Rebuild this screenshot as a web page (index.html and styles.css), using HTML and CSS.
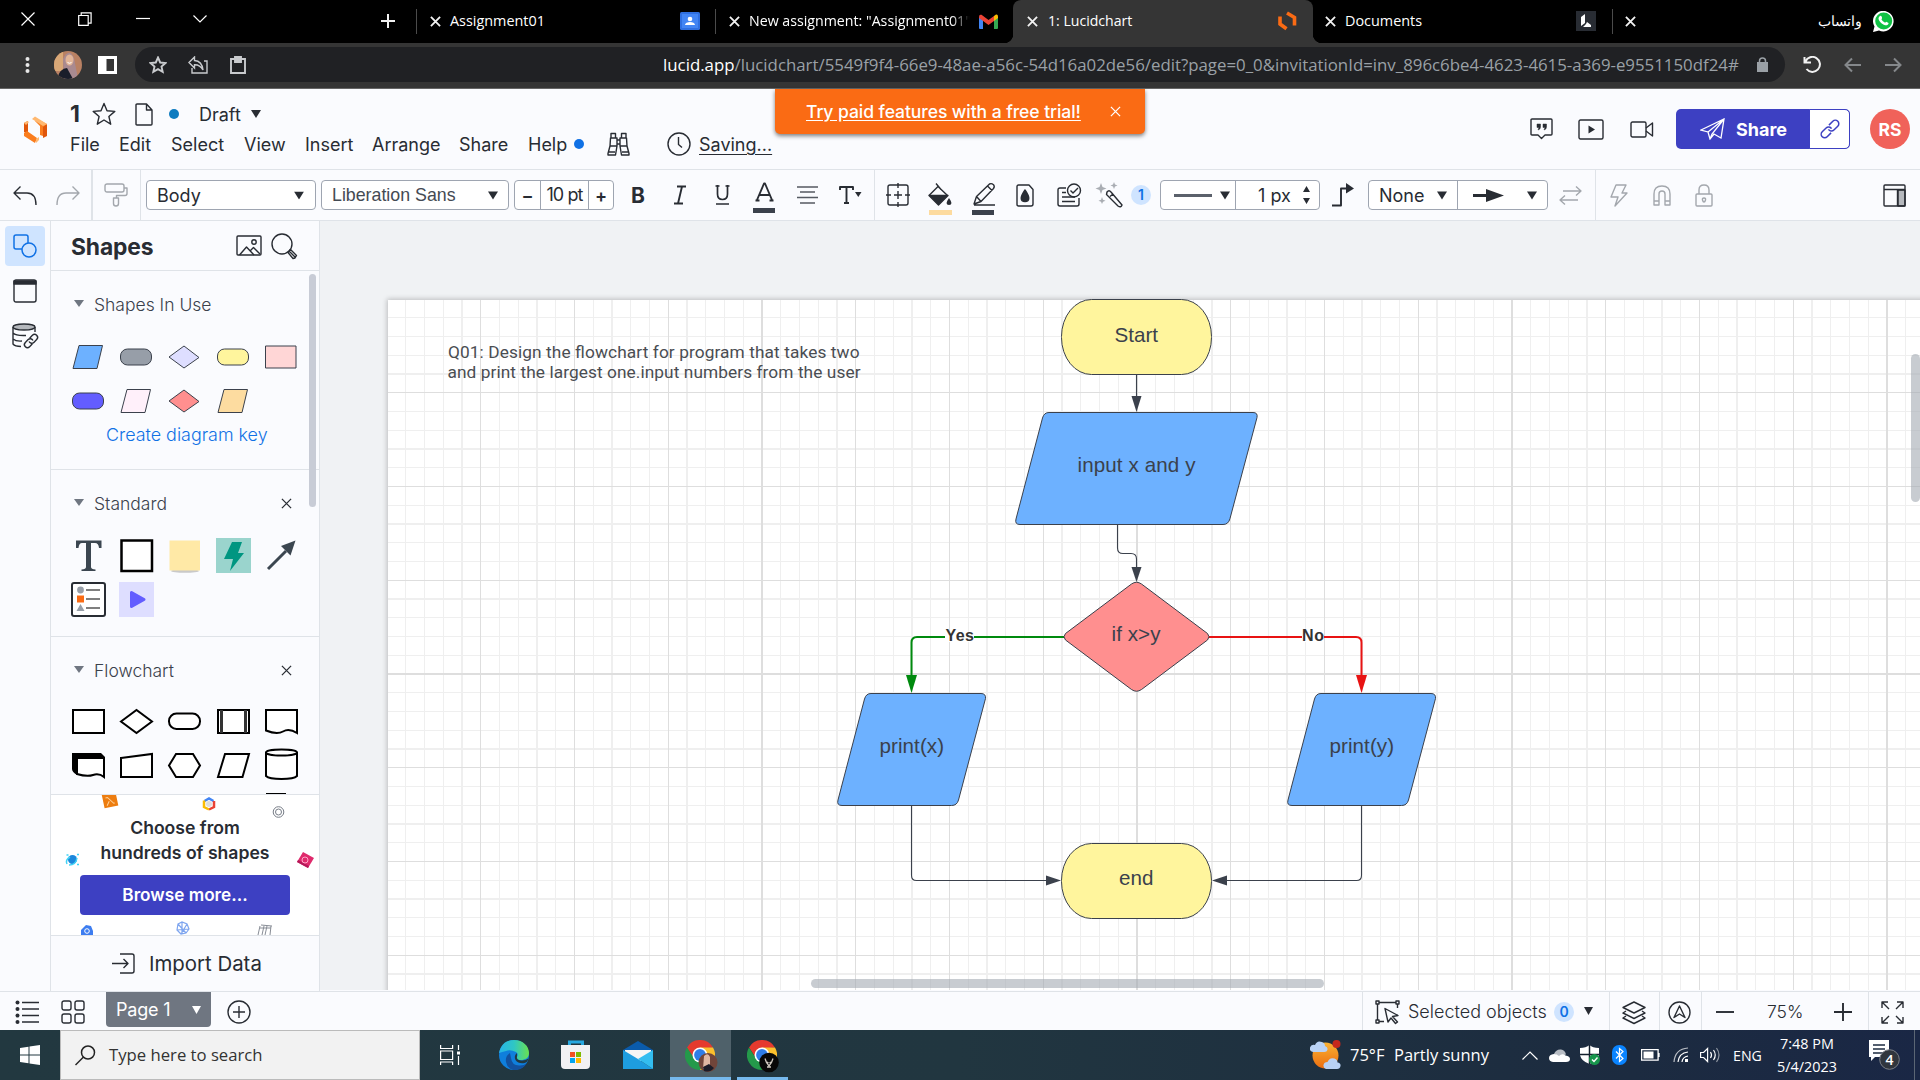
FILE: index.html
```html
<!DOCTYPE html>
<html lang="en">
<head>
<meta charset="utf-8">
<title>1: Lucidchart</title>
<link rel="stylesheet" href="styles.css">
</head>
<body>
<svg class="defs" width="0" height="0">
  <defs>
    <symbol id="x" viewBox="0 0 12 12"><path d="M1 1l10 10M11 1L1 11"/></symbol>
    <symbol id="caret" viewBox="0 0 10 8"><path d="M0 0h10L5 8z"/></symbol>
    <symbol id="chrome" viewBox="0 0 30 30">
      <path fill="#e53a2e" d="M2 7.5A15 15 0 0 1 28 7.5L15 8.500 9 18z"/>
      <path fill="#24994a" d="M2 7.500A15 15 0 0 0 15 30l6.500-11.300L9 18.500z"/>
      <path fill="#fbc02d" d="M28 7.500A15 15 0 0 1 15 30l6.500-11.500L15 7.500z"/>
      <circle cx="15" cy="15" r="7.500" fill="#fff"/><circle cx="15" cy="15" r="5.900" fill="#2f7de8"/>
    </symbol>
  </defs>
</svg>

<div class="tabstrip">
  <svg class="wt" width="14" height="14" viewBox="0 0 14 14"><path d="M.5.5l13 13M13.500.5L.5 13.500"/></svg>
  <svg class="wt" width="14" height="14" viewBox="0 0 14 14"><path d="M.7 3.500h9.500v9.800H.7zM3.200 3.500V.8h9.900v10.400h-2.900"/></svg>
  <svg class="wt" width="14" height="14" viewBox="0 0 14 14"><path d="M0 6.500h14"/></svg>
  <svg class="wt" width="14" height="14" viewBox="0 0 14 14"><path d="M.5 3.500L7 10 13.500 3.500"/></svg>
  <svg class="wb low" width="16" height="16" viewBox="0 0 16 16"><path d="M8 1v14M1 8h14"/></svg>
  <i class="sep"></i>
  <svg class="wb low" width="11" height="11"><use href="#x"/></svg>
  <span class="tt t-a">Assignment01</span>
  <svg class="low" width="20" height="18"><rect width="20" height="18" rx="1.500" fill="#2f6fe0"/><rect x="2" y="2" width="16" height="14" fill="#4285f4"/><circle cx="10" cy="7" r="2.300" fill="#fff"/><path d="M5 13c0-4 10-4 10 0z" fill="#fff"/></svg>
  <i class="sep"></i>
  <svg class="wb low" width="11" height="11"><use href="#x"/></svg>
  <span class="tt fade t-b">New assignment: "Assignment01"</span>
  <svg class="low" width="19" height="15" viewBox="0 0 19 15"><path fill="#4285f4" d="M0 3v11q0 1 1 1h3V6z"/><path fill="#34a853" d="M19 3v11q0 1-1 1h-3V6z"/><path fill="#fbbc04" d="M15 2l2-1.500q2-.5 2 2V4l-4 3z"/><path fill="#ea4335" d="M0 3Q0 0 2.500.8L9.500 6l5.500-4v5l-5.500 4L0 4z"/></svg>
  <div class="tab-on">
    <svg class="wb" width="11" height="11"><use href="#x"/></svg>
    <span class="tt t-c">1: Lucidchart</span>
    <svg width="19" height="20" viewBox="0 0 19 20"><path fill="none" stroke="#fa6b14" stroke-width="3.600" d="M2 5.500v7.500l6.500 4.800M9 2l7.500 4.500V14.500"/></svg>
  </div>
  <svg class="wb low" width="11" height="11"><use href="#x"/></svg>
  <span class="tt t-d">Documents</span>
  <svg class="low" width="20" height="20"><rect width="20" height="20" fill="#282c33"/><path fill="#fff" d="M5 6l4-3v9l-4 3zM10 13l1-2 4 3v2h-8z"/></svg>
  <i class="sep"></i>
  <svg class="wb low" width="11" height="11"><use href="#x"/></svg>
  <span class="tt t-e" dir="rtl" lang="ar">واتساب</span>
  <svg class="low" width="21" height="21" viewBox="0 0 21 21"><path fill="#fff" d="M0 21l1.500-5.500A10.300 10.300 0 1 1 6 19.500z"/><circle cx="10.700" cy="10" r="8.500" fill="#10c244"/><path fill="#fff" d="M7 5q1.500-.7 2 1.500.3 1-.6 1.700 1.300 2.700 3.700 3.600l1-1.100 2.500 1.200c0 2-2 2.700-3.400 2.400C8.500 13.300 5.500 9.500 5.500 7.500q.1-1.600 1.500-2.500z"/></svg>
</div>

<div class="navbar">
  <svg width="5" height="18"><g fill="#e8e8e8"><circle cx="2.500" cy="3" r="2"/><circle cx="2.500" cy="9" r="2"/><circle cx="2.500" cy="15" r="2"/></g></svg>
  <svg width="28" height="28" viewBox="0 0 28 28"><clipPath id="av"><circle cx="14" cy="14" r="14"/></clipPath><g clip-path="url(#av)"><path fill="#b98163" d="M0 0h28v28H0z"/><path fill="#d9a877" d="M0 0h9v20H0z"/><path fill="#a98a90" d="M9 8Q15-4 20 7l4 21H10z"/><ellipse cx="15.500" cy="9" rx="4" ry="5.500" fill="#e2b598"/><path fill="#1a1e2a" d="M3 28Q6 17 13 17l6 11z"/><path d="M13.500 11.500q2 1.500 4 0" stroke="#fff" fill="none"/></g></svg>
  <svg width="19" height="18"><path fill="#fff" fill-rule="evenodd" d="M0 0h19v18H0zM8.500 3v12H16V3z"/></svg>
  <div class="omnibox">
    <svg class="g2" width="18" height="18" viewBox="0 0 18 18"><path d="M9 1.500l2.200 5 5.300.5-4 3.600 1.200 5.300L9 13.100l-4.700 2.800 1.200-5.300-4-3.600 5.300-.5z"/></svg>
    <svg class="g1" width="20" height="18" viewBox="0 0 20 18"><path d="M1 6.500L6.500 1v3.500Q14 5 15 14 12 8.500 6.500 8.700V12zM4 12v5h15V5h-3"/></svg>
    <svg class="g2" width="16" height="18" viewBox="0 0 16 18"><path d="M1 3h14v14H1z"/><path d="M5 1h6v5H5z" fill="#c9cbce"/></svg>
    <div class="url"><b>lucid.app</b>/lucidchart/5549f9f4-66e9-48ae-a56c-54d16a02de56/edit?page=0_0&amp;invitationId=inv_896c6be4-4623-4615-a369-e9551150df24#</div>
    <svg width="11" height="15"><path fill="#9aa0a6" d="M0 5h11v10H0z"/><path d="M2.500 6V4q0-3 3-3t3 3v2" fill="none" stroke="#9aa0a6" stroke-width="1.500"/></svg>
  </div>
  <svg class="wb" width="19" height="18" viewBox="0 0 19 18"><path d="M2.500 5.500A7.500 7.500 0 1 1 3.500 13M1.500 1v5.500H8" /></svg>
  <svg class="gd" width="18" height="16" viewBox="0 0 18 16"><path d="M17 8H2M8 1.500L1.500 8 8 14.500"/></svg>
  <svg class="gd" width="18" height="16" viewBox="0 0 18 16"><path d="M1 8h15M10 1.500L16.500 8 10 14.500"/></svg>
</div>

<header class="apphead">
  <svg class="logo" width="24" height="28" viewBox="0 0 24 28"><path fill="#e0560b" d="M1 7l4-2v13l-4-2zM20 10l4-2v12l-4 2z"/><path fill="#fa7d1e" d="M1 17l3-2 10 7-2 5L1 20zM12 5l2-2 10 5-4 3v9l-3-1v-9z"/><path fill="#ffb870" d="M9 3l3-2.500L24 8l-4 2zM1 7l3-2 2 1-3 3zM13 23l3-2v3l-3 3z"/></svg>
  <div class="headmain">
    <div class="titlerow">
      <span class="doc">1</span>
      <svg class="ic" width="24" height="24" viewBox="0 0 24 24"><path d="M12 1.500l3 7.200 7.800.7-5.900 5.100 1.800 7.700L12 18l-6.700 4.200 1.800-7.700-5.900-5.100 7.800-.7z"/></svg>
      <svg class="ic" width="18" height="23" viewBox="0 0 18 23"><path d="M1 2q0-1 1-1h9.500L17 7v14q0 1-1 1H2q-1 0-1-1zM11.500 1v6H17"/></svg>
      <i class="dot"></i>
      <span class="t18 draft">Draft</span>
      <svg class="car" width="10" height="8"><use href="#caret"/></svg>
    </div>
    <nav class="menurow">
      <span>File</span><span>Edit</span><span>Select</span><span>View</span><span>Insert</span><span>Arrange</span><span>Share</span><span>Help</span><i class="dot blue"></i>
      <svg class="ic" width="23" height="24" viewBox="0 0 23 24"><path d="M4 6V1.500h4.500V6M14.500 6V1.500H19V6M3.500 6h6.500v8H3zM13 6h6.500l.5 8h-7zM10 8h3M10 12h3M3 14L1 21.500V23h7.500l1.500-9M20 14l2 7.500V23h-7.500L13 14M1 20h7M15 20h7"/></svg>
      <svg class="ic" width="24" height="24" viewBox="0 0 24 24"><circle cx="12" cy="12" r="11"/><path d="M11.500 5v7.500l3.500 3"/></svg>
      <u>Saving...</u>
    </nav>
  </div>
  <div class="headright">
    <svg class="ic" width="23" height="22" viewBox="0 0 23 22"><path d="M2 1h19q1 0 1 1v14q0 1-1 1h-6l-3.500 3.500L8 17H2q-1 0-1-1V2q0-1 1-1z"/><path fill="#282c33" stroke-width=".5" d="M7 6h3.500v3q0 2.500-2.500 3l1-2.500H7zM13 6h3.500v3q0 2.500-2.500 3l1-2.500h-2z"/></svg>
    <svg class="ic" width="26" height="21" viewBox="0 0 26 21"><rect x="1" y="1" width="24" height="19" rx="1.500"/><path fill="#282c33" stroke="none" d="M10.500 6.500l6.500 4-6.500 4z"/></svg>
    <svg class="ic" width="24" height="17" viewBox="0 0 24 17"><rect x="1" y="1" width="15" height="15" rx="1.500"/><path d="M16 7l6.500-5v13L16 10"/></svg>
    <div class="sharebtn">
      <svg width="25" height="22" viewBox="0 0 25 22"><path fill="none" stroke="#fff" stroke-width="1.300" d="M1 12L24 1l-3 19-7-4-4 5-2-7zM24 1L8 14M24 1L12 16l-2 5"/></svg>
      <b>Share</b>
      <span class="link"><svg width="22" height="22" viewBox="0 0 22 22"><g fill="none" stroke="#3d40c2" stroke-width="1.500" transform="rotate(-45 11 11)"><path d="M9 14.500H3.500a3.500 3.500 0 0 1 0-7H9a3.500 3.500 0 0 1 3.400 4.300M13 7.500h5.500a3.500 3.500 0 0 1 0 7H13a3.500 3.500 0 0 1-3.400-4.300"/></g></svg></span>
    </div>
    <div class="rs">RS</div>
  </div>
  <div class="banner"><u>Try paid features with a free trial!</u><svg width="11" height="11"><use href="#x"/></svg></div>
</header>

<div class="toolbar">
  <svg class="ic" width="24" height="21" viewBox="0 0 24 21"><path d="M7.500 1.500L1 8l6.500 6.500M1 8h13q9 0 9 12"/></svg>
  <svg class="ic dim" width="24" height="21" viewBox="0 0 24 21"><path d="M16.500 1.500L23 8l-6.500 6.500M23 8H10Q1 8 1 20"/></svg>
  <i class="vd two"></i>
  <svg class="ic dim" width="24" height="24" viewBox="0 0 24 24"><rect x="1" y="1" width="19" height="8" rx="2"/><path d="M20 5h3v5.500q0 2-2 2h-8.500V15M9.500 15h5v5.500q0 2.500-2.500 2.500t-2.500-2.500z"/></svg>
  <i class="vd"></i>
  <div class="sel s-body"><span class="t18 tb">Body</span><svg class="car" width="10" height="9" viewBox="0 0 10 8"><use href="#caret"/></svg></div>
  <div class="sel s-font"><span class="lib">Liberation Sans</span><svg class="car" width="10" height="9"><use href="#caret"/></svg></div>
  <div class="sel s-size"><b>−</b><span>10 pt</span><b>+</b></div>
  <span class="fmt fb">B</span>
  <svg class="ic w2" width="14" height="20" viewBox="0 0 14 20"><path d="M4 1.500h9M1 18.500h9M9 1.500L5 18.500"/></svg>
  <svg class="ic w2" width="15" height="20" viewBox="0 0 15 20"><path d="M2.500 0v9q0 5.500 5 5.500t5-5.500V0M1 19h13M.5 1h4M10.500 1h4" stroke-width="1.700"/></svg>
  <svg class="ic w2 drop" width="23" height="31" viewBox="0 0 23 31"><path d="M4 18l7-16.500h1L19 18M6.500 13h10M2.500 18.500h4M16.500 18.500h4"/><path d="M0 26h22v5H0z" fill="#3b414c" stroke="none"/></svg>
  <svg class="ic al" width="21" height="18" viewBox="0 0 21 18"><path d="M0 1h21M3 6h15M0 11.500h21M3 17h15"/></svg>
  <svg class="ic w2" width="24" height="18" viewBox="0 0 24 18"><path d="M1 4V1h13v3M7.500 1v16M5 17h5"/><path d="M16 6h6.500l-3.200 5z" fill="#282c33" stroke="none"/></svg>
  <i class="vd"></i>
  <svg class="ic" width="24" height="24" viewBox="0 0 24 24"><path d="M9 2H4q-2 0-2 2v5M15 2h5q2 0 2 2v5M9 22H4q-2 0-2-2v-5M15 22h5q2 0 2-2v-5M12 0v5M12 8v8M12 19v5M0 12h5M8 12h8M19 12h5M7 2h10M7 22h10M2 7v10M22 7v10"/></svg>
  <svg class="ic drop" width="25" height="33" viewBox="0 0 25 33"><path fill="#282c33" d="M2 13.500h19l-9.500 9.500z"/><path d="M2 13.500L11 4.500l9.500 9M9 1.500l5 6"/><path fill="#282c33" stroke="none" d="M22 16q5 7 0 7t0-7z"/><path d="M2 28h23v5H2z" fill="#fddb9f" stroke="none"/></svg>
  <svg class="ic drop" width="24" height="33" viewBox="0 0 24 33"><path d="M2 22l2.500-7.500L17.500 2q2-1 4 .7 1.500 2 0 3.800L9 19.500zM15.500 4l4.500 4.500M4.500 14.500l4.500 5M2 23h21"/><path d="M0 28h22v5H0z" fill="#3b414c" stroke="none"/></svg>
  <svg class="ic" width="18" height="23" viewBox="0 0 18 23"><path d="M2.500 1H13l4 4.500V20q0 2-2 2H2.500Q1 22 1 20.500V2.500Q1 1 2.500 1z"/><path fill="#282c33" d="M9 6q7.500 11 0 11.500Q1.500 17 9 6z"/></svg>
  <svg class="ic" width="25" height="24" viewBox="0 0 25 24"><circle cx="17" cy="7.500" r="6.500"/><path d="M13.500 7.500L16 10l5-5M9 5H3Q1 5 1 7v14q0 2 2 2h17q2 0 2-2v-6M5 9.500h4M5 14h13M5 18.500h13"/></svg>
  <svg class="ic" width="28" height="26" viewBox="0 0 28 26"><path d="M11 10q2-2.500 4 0l11 13q-1 3-4 1L10.500 12.500zM14 14.500l3-2.500"/><path fill="#a9adb3" stroke="none" d="M5 1l1.500 4 4 1.500-4 1.500L5 12 3.500 8l-4-1.500 4-1.500zM18 0l1 2.500 2.500 1-2.500 1-1 2.500-1-2.500-2.500-1 2.500-1zM6 15l1 2.700 2.500 1L7 19.700 6 22l-1-2.300-2.500-1 2.500-1z"/></svg>
  <i class="badge">1</i>
  <div class="sel s-line"><svg width="40" height="3"><path d="M0 0h38v3H0z" fill="#5b616b"/></svg><svg class="car" width="10" height="9"><use href="#caret"/></svg><span class="px">1 px</span><svg width="7" height="18" viewBox="0 0 7 18"><path fill="#282c33" d="M0 6h7L3.500 0zM0 12h7l-3.500 6z"/></svg></div>
  <svg class="ic w2" width="23" height="24" viewBox="0 0 23 24"><path d="M0 22.500h9V5.500h6"/><path d="M14 0l8 5.500-8 5z" fill="#282c33" stroke="none"/></svg>
  <div class="sel s-end"><span class="t18">None</span><svg class="car" width="10" height="9"><use href="#caret"/></svg><svg width="31" height="13"><path fill="#282c33" d="M0 5h13V0l18 6.500L13 13V8H0z"/></svg><svg class="car" width="10" height="9"><use href="#caret"/></svg></div>
  <svg class="ic dim" width="23" height="19" viewBox="0 0 23 19"><path d="M4 5h18l-5-4.500M22 5l-5 4.500M19 14H1l5-4.500M1 14l5 4.500"/></svg>
  <i class="vd"></i>
  <svg class="ic dim" width="18" height="23" viewBox="0 0 18 23"><path d="M6 1h10l-4 8h5L5 22l3-9H1z"/></svg>
  <svg class="ic dim" width="18" height="21" viewBox="0 0 18 21"><path d="M1 20V9q0-8 8-8t8 8v11h-5V9q0-3-3-3T6 9v11zM1 16h5M12 16h5"/></svg>
  <svg class="ic dim" width="18" height="23" viewBox="0 0 18 23"><rect x="1" y="10" width="16" height="12" rx="1"/><path d="M4 10V6q0-5 5-5t5 5v4M9 14q2 0 1.500 2T9 18t-1.500-2T9 14z"/></svg>
  <svg class="ic" width="23" height="23" viewBox="0 0 23 23"><path fill="#b5b8bd" d="M15 6h7v16h-7z"/><rect x="1" y="1" width="21" height="21" rx="1"/><path d="M1 5.500h21M14.500 5.500V22"/></svg>
</div>

<main class="work">
  <aside class="rail">
    <div class="railon"><svg width="24" height="24" viewBox="0 0 24 24"><g fill="none" stroke="#1071e5" stroke-width="1.500"><path d="M9 15H3q-2 0-2-2V3q0-2 2-2h10q2 0 2 2v6"/><circle cx="16" cy="16" r="7"/></g></svg></div>
    <svg class="ic" width="24" height="24" viewBox="0 0 24 24"><rect x="1" y="1" width="22" height="22" rx="2"/><path fill="#282c33" d="M1 2h22v3H1z"/></svg>
    <svg class="ic" width="27" height="26" viewBox="0 0 27 26"><ellipse cx="12" cy="4" rx="11" ry="3" fill="#b5b8bd"/><path d="M1 4v17q2 2.500 8 2.500M23 4v5M1 10q3 3 13 2.500M1 16q3 2.500 9 2"/><g transform="rotate(-45 19 18)"><path d="M18 21h-4a3 3 0 0 1 0-6h4a3 3 0 0 1 2.800 4M20 15h4a3 3 0 0 1 0 6h-4a3 3 0 0 1-2.800-4"/></g></svg>
  </aside>
  <aside class="panel">
    <div class="phead"><b>Shapes</b>
      <svg class="ic" width="26" height="21" viewBox="0 0 26 21"><rect x="1" y="1" width="24" height="19" rx="1"/><circle cx="18" cy="7" r="2.200"/><path d="M3.500 20l7-8 7.500 8M14 16l3.500-3.500L24 19"/></svg>
      <svg class="ic" width="27" height="26" viewBox="0 0 27 26"><circle cx="11" cy="11" r="10"/><path d="M18 18l6.500 6.500M19.500 16.500l6 6-1.500 2.500-2 .5-5-6z"/></svg>
    </div>
    <div class="plist">
      <section class="sec1">
        <h3><svg width="10" height="7" viewBox="0 0 10 8" preserveAspectRatio="none"><use href="#caret"/></svg><span>Shapes In Use</span></h3>
        <svg class="shapes" width="240" height="70" viewBox="0 0 240 70"><g stroke="#3b414c" stroke-width="1">
          <path fill="#6db1ff" d="M7 .5h23.500l-5.500 23H1z"/><rect x="48.500" y="4" width="31" height="16" rx="7" fill="#979ea8"/><path fill="#dedeff" d="M112 1l15 11.500L112 23 97 12z"/><rect x="145.500" y="4" width="31" height="16" rx="7" fill="#fff59d"/><path fill="#ffd6d6" d="M193.500 1h30.500v22h-30.500z"/>
          <rect x=".5" y="48" width="31" height="16" rx="7" fill="#635dff"/><path fill="#fff0fa" d="M55 44.500h23.500l-5.500 23H49z"/><path fill="#ff8f8f" d="M112 45l15 11.500L112 67 97 56z"/><path fill="#fddca0" d="M152 44.500h23.500l-5.500 23h-24z"/></g></svg>
        <a>Create diagram key</a>
      </section>
      <section class="sec2">
        <h3><svg width="10" height="7" viewBox="0 0 10 8" preserveAspectRatio="none"><use href="#caret"/></svg><span>Standard</span><svg class="cl" width="11" height="11"><use href="#x"/></svg></h3>
        <svg class="shapes std" width="240" height="80" viewBox="0 0 240 80">
          <path fill="#3b4650" d="M5 2.500h25.500V10H28q-.5-5-4-5h-4v24q0 2 4.500 2.500V33H10.500v-1.500q4.500-.5 4.500-2.500V5h-4Q8 5 7.500 10H5z"/>
          <path fill="#fff" stroke="#000" stroke-width="2.500" d="M50.500 2.500h30.500v30.500H50.500z"/>
          <ellipse cx="114" cy="33" rx="14" ry="1.800" fill="#c9c9c9"/><path fill="#ffe9a6" d="M98.500 2.500H129v30H98.500z"/>
          <path fill="#9ad4cd" d="M145 0h35v35h-35z"/><path fill="#009681" d="M161 4h10l-4 11h6L159 33l3-12h-9z"/>
          <path stroke="#3b4650" stroke-width="3" d="M197 31l18-18"/><path fill="#3b4650" d="M224.500 2.500l-5 15-9.500-9.500z"/>
          <rect x="1" y="45" width="33" height="33" rx="2" fill="#fff" stroke="#282c33" stroke-width="2"/><circle cx="9.500" cy="52" r="3.400" fill="#979ea8"/><path fill="#fa6b14" d="M6 57.500h7v7H6z"/><path fill="#979ea8" d="M9.500 66l4 7h-8z"/><path stroke="#555" stroke-width="1.300" d="M15 52h14M15 61h14M15 70h14"/>
          <path fill="#dedeff" d="M48 44h35v35H48z"/><path fill="#635dff" stroke="#635dff" stroke-width="3" stroke-linejoin="round" d="M60.500 54.500v14l12.500-7z"/></svg>
      </section>
      <section class="sec3">
        <h3><svg width="10" height="7" viewBox="0 0 10 8" preserveAspectRatio="none"><use href="#caret"/></svg><span>Flowchart</span><svg class="cl" width="11" height="11"><use href="#x"/></svg></h3>
        <svg class="shapes flo" width="240" height="86" viewBox="0 0 240 86"><g fill="#fff" stroke="#000" stroke-width="2">
          <path d="M2 2h31v23H2zM50 13.500L65.500 2 81 13.500 65.500 25z"/><rect x="98" y="5.500" width="31" height="15.500" rx="7.500"/><path d="M147 2h31v23h-31z"/><path stroke-width="3" stroke="#333" d="M150.500 2v23M174.500 2v23"/><path d="M195 2h31v23q-8-5-14-1.500t-17-1z"/>
          <path fill="#000" stroke="none" d="M1 45h29l4 4v3H6v15q-5-3-5-6z"/><path d="M6 50h27v19q-5-4-11-2t-16-1z"/><path d="M50 50l31-4v23H50zM98 57.500l7-11.500h17l7 11.500-7 11.500h-17zM154 46h24l-6.500 23H147z"/><path d="M195 44v24q3 3 15.500 3T226 68V44"/><ellipse cx="210.500" cy="44.500" rx="15.500" ry="3"/><path d="M195 86h20"/></g></svg>
      </section>
      <i class="sb"></i>
    </div>
    <div class="promo">
      <p>Choose from<br>hundreds of shapes</p>
      <div class="browse">Browse more...</div>
      <svg class="deco" width="268" height="140" viewBox="51 795 268 140">
        <g transform="rotate(-12 110 800)"><path fill="#ed7d10" d="M103 793h14v14h-14z"/><path d="M106 797h2l5 7h1M109 801l-3 4" stroke="#ffd39b" fill="none"/></g>
        <g fill="none" stroke-width="2.500"><path stroke="#4285f4" d="M204.500 801l4.500-2.500 4.500 2.500"/><path stroke="#ea4335" d="M214 801v6l-5 2.500"/><path stroke="#fbbc04" d="M204 800.500v6.500l5 2.500"/></g><circle cx="209" cy="804" r="3" fill="#ddd"/>
        <g fill="none" stroke="#777d87"><circle cx="278.500" cy="812" r="5.300"/><circle cx="278.500" cy="812" r="3"/></g>
        <circle cx="72.500" cy="859.500" r="4.500" fill="#1b87dc"/><path d="M67 864q-2-4 3-7M69 865q7 0 8-7M66.500 855h2M77 854.500h2M77 864.500h2" fill="none" stroke="#42d3f5" stroke-width="1.500"/>
        <path fill="#df2a6c" d="M303 852l11 6-6 10-11-6z"/><path fill="#b51858" d="M297 862l11 6 1-2-11-6z"/><circle cx="305" cy="860" r="3" fill="none" stroke="#ffa6c8"/>
        <path fill="#3d7df0" d="M81 935v-5l5-5 5 1 2 5v4z"/><circle cx="87" cy="931" r="2.300" fill="none" stroke="#fff"/>
        <g fill="none" stroke="#7ea5ef" stroke-width="1.200"><path d="M178 924l4-2 5 2 2 5-3 4-5 1-4-4zM178 924l8 9M187 924l-6 10M177 930l12-1M182 922v12"/></g>
        <g fill="none" stroke="#888d96"><path d="M261 925l11 1M260 926l-2 9M264 926l-2 9M267 926l-2 9M271 926l-1 9M260 928h11"/></g>
      </svg>
    </div>
    <div class="import"><svg class="ic" width="23" height="21" viewBox="0 0 23 21"><path d="M8 1h12q2 0 2 2v15q0 2-2 2H8M0 10.500h16M11.500 6l4.500 4.500-4.500 4.500"/></svg><span>Import Data</span></div>
  </aside>
  <div class="canvas">
    <div class="page"></div>
    <svg class="flow" width="1600" height="769" viewBox="320 221 1600 769">
      <g class="nodes">
        <path class="ed" d="M1136.500 374v30"/><path class="ah" d="M1131.500 396h10l-5 16z"/>
        <path class="ed" d="M1117.500 525v23q0 5.500 5.500 5.500h8q5.500 0 5.500 5.500v13"/><path class="ah" d="M1131.500 567h10l-5 15z"/>
        <path class="ed gr" d="M1064 637H917q-5.500 0-5.500 5.500V680"/><path fill="#008a0e" d="M906 675h11l-5.500 18z"/>
        <path class="ed rd" d="M1209 637h147q5.500 0 5.500 5.500V680"/><path fill="#e81313" d="M1356 675h11l-5.500 18z"/>
        <path class="ed" d="M911.500 806v69.500q0 5 5 5H1050"/><path class="ah" d="M1046 875.500v10l15-5z"/>
        <path class="ed" d="M1361.500 806v69.500q0 5-5 5H1223"/><path class="ah" d="M1227 875.500v10l-15-5z"/>
        <rect class="nd" x="1061.500" y="299.500" width="150" height="75" rx="30" ry="37" fill="#fff59d"/>
        <rect class="nd" x="1061.500" y="843.500" width="150" height="75" rx="30" ry="37" fill="#fff59d"/>
        <path class="nd bl" d="M1049 412.500h204q5 0 4 5l-27 101q-1.500 6-7 6H1020q-5.500 0-4-5.500l26.500-101q1.500-5.500 6.500-5.500z"/>
        <path class="nd bl" d="M871 693.500h110q5 0 4.500 5L958.500 800q-1.500 5.500-7 5.500H842q-5.500 0-4-5.500l26.500-101q1.500-5.500 6.500-5.500z"/>
        <path class="nd bl" d="M1321 693.500h110q5 0 4.500 5L1408.500 800q-1.500 5.500-7 5.500h-109.500q-5.500 0-4-5.500l26.500-101q1.500-5.500 6.500-5.500z"/>
        <path class="nd" fill="#ff8f8f" d="M1131.500 584q5-3.500 10 0l66 49.500q3 3.300 0 6.500l-66 49.500q-5 3.500-10 0l-66-49.500q-3-3.200 0-6.500z"/>
        <path fill="#fff" d="M945 632h29v10h-29zM1302 632h22v10h-22z"/>
      </g>
      <g class="lbl">
        <text x="1114.500" y="341.500" textLength="43.500">Start</text>
        <text x="1077.500" y="472" textLength="118">input x and y</text>
        <text x="1111.500" y="641" textLength="49">if x&gt;y</text>
        <text x="879.500" y="753" textLength="64.500">print(x)</text>
        <text x="1329.500" y="753" textLength="64.500">print(y)</text>
        <text x="1119" y="885" textLength="34.500">end</text>
        <text class="yn" x="945.500" y="640.500" textLength="28.500">Yes</text>
        <text class="yn" x="1302" y="640.500" textLength="22">No</text>
        <text class="q" x="448" y="357.500" textLength="411.500">Q01: Design the flowchart for program that takes two</text>
        <text class="q" x="447.500" y="378" textLength="413">and print the largest one.input numbers from the user</text>
      </g>
      <rect x="811" y="979" width="513" height="9" rx="4.500" fill="#a4aab2" fill-opacity=".6"/>
      <rect x="1911" y="354" width="9" height="148" rx="4.500" fill="#a4aab2" fill-opacity=".6"/>
    </svg>
  </div>
</main>

<div class="status">
  <svg class="ic" width="24" height="24" viewBox="0 0 24 24"><path d="M7 2.500h17M7 9h17M7 15.500h17M7 22h17"/><g fill="#282c33" stroke="none"><circle cx="2.500" cy="2.500" r="2"/><circle cx="2.500" cy="9" r="2"/><circle cx="2.500" cy="15.500" r="2"/><circle cx="2.500" cy="22" r="2"/></g></svg>
  <svg class="ic" width="24" height="24" viewBox="0 0 24 24"><rect x="1" y="1" width="9" height="9" rx="2"/><rect x="14" y="1" width="9" height="9" rx="2"/><rect x="1" y="14" width="9" height="9" rx="2"/><rect x="14" y="14" width="9" height="9" rx="2"/></svg>
  <div class="ptab"><span>Page 1</span><svg width="9" height="8" viewBox="0 0 10 8" preserveAspectRatio="none"><use href="#caret" fill="#fff"/></svg></div>
  <svg class="ic" width="24" height="24" viewBox="0 0 24 24"><circle cx="12" cy="12" r="11"/><path d="M12 6v12M6 12h12"/></svg>
  <i class="vd"></i>
  <svg class="ic" width="25" height="24" viewBox="0 0 25 24"><path d="M2.500 4v16M4 2.500h17M22.500 4v4M4 21.500h5M1 1h3v3H1zM21 1h3v3h-3zM1 20h3v3H1zM10 8.500l13 7-5.500 1 5 5.500-2 1.500-4.500-5.500-3 4z"/></svg>
  <span class="so">Selected objects</span>
  <i class="badge">0</i>
  <svg class="car" width="9" height="8" viewBox="0 0 10 8" preserveAspectRatio="none"><use href="#caret"/></svg>
  <i class="vd"></i>
  <svg class="ic" width="24" height="23" viewBox="0 0 24 23"><path d="M12 1l11 5.500L12 12 1 6.500zM4 10l-3 2 11 5.500L23 12l-3-2M4 15l-3 2 11 5.500L23 17l-3-2"/></svg>
  <i class="vd"></i>
  <svg class="ic" width="23" height="23" viewBox="0 0 23 23"><circle cx="11.500" cy="11.500" r="10.500"/><path d="M11.500 5l5.500 11.500-5.500-3.500L6 16.500z"/></svg>
  <i class="vd"></i>
  <svg class="ic w2" width="18" height="18" viewBox="0 0 18 18"><path d="M0 9h18"/></svg>
  <span class="zm">75%</span>
  <svg class="ic w2" width="18" height="18" viewBox="0 0 18 18"><path d="M0 9h18M9 0v18"/></svg>
  <i class="vd"></i>
  <svg class="ic" width="23" height="23" viewBox="0 0 23 23"><path d="M1 7V1h6M1 1l7 7M16 1h6v6M22 1l-7 7M1 16v6h6M1 22l7-7M22 16v6h-6M22 22l-7-7"/></svg>
</div>

<div class="taskbar">
  <svg width="20" height="20" viewBox="0 0 20 20"><path fill="#fff" d="M0 3l8.500-1.300v7.800H0zM9.500 1.500L20 0v9.500H9.500zM0 10.500h8.500v7.800L0 17zM9.500 10.500H20V20L9.500 18.500z"/></svg>
  <div class="search"><svg width="21" height="21" viewBox="0 0 21 21"><g fill="none" stroke="#222" stroke-width="1.500"><circle cx="13" cy="7.500" r="6.500"/><path d="M8.500 12L.5 20"/></g></svg><span>Type here to search</span></div>
  <svg width="21" height="20" viewBox="0 0 21 20"><g fill="none" stroke="#fff" stroke-width="1.200"><path d="M.6 0v3.500h12V0M.6 6h12v8.500H.6zM.6 20v-3h12v3M18.500 0v5M18.500 11v9"/></g><path fill="#fff" d="M17 6.500h3v3h-3z"/></svg>
  <svg width="30" height="30" viewBox="0 0 30 30"><defs><linearGradient id="e1" x1="0" x2="1"><stop offset="0" stop-color="#27b4e8"/><stop offset=".5" stop-color="#2fc6c4"/><stop offset="1" stop-color="#6ae14f"/></linearGradient></defs><circle cx="15" cy="15" r="15" fill="#0f7fdc"/><path fill="#12519f" d="M12 18q1 8 9 7.500 4 0 7-2.500-5 8-14 7-6-2-7-8t4-9z"/><path fill="url(#e1)" d="M0 13C2 3 8 0 15 0c9 0 15 6 15 13 0 5-4 7-8 7-3 0-5-1-4-3q2-3-1-5-6-3-10-1-4 1-7 2z"/><path fill="#223840" d="M18 16q-1 4 4 4.500 4 .5 7.500-2-1 4-4 4.500-6 1-9-3-2-4 1.500-7z"/></svg>
  <svg width="30" height="30" viewBox="0 0 30 30"><path d="M8.500 7V2h13v5" fill="none" stroke="#27a8e0" stroke-width="3"/><path fill="#f1f1f3" d="M0 5h29v20q0 4-4 4H4q-4 0-4-4z"/><path fill="#f25022" d="M9 12h5v5H9z"/><path fill="#7fba00" d="M15 12h5v5h-5z"/><path fill="#00a4ef" d="M9 18h5v5H9z"/><path fill="#ffb900" d="M15 18h5v5h-5z"/></svg>
  <svg width="30" height="28" viewBox="0 0 30 28"><path fill="#0a5bab" d="M0 9L15 0l15 9v4H0z"/><path fill="#f5f5f5" d="M2 9h26v6l-13 6L2 15z"/><path fill="#1e9de0" d="M0 9l15 9L30 28H0z"/><path fill="#33bdf0" d="M30 9v19L15 18z"/></svg>
  <div class="app act"><svg width="34" height="34" viewBox="0 0 34 34"><use href="#chrome" width="30" height="30"/><circle cx="23" cy="22.500" r="9.500" fill="#71453a"/><path fill="#e0b7a3" d="M19 16q4-4 6 1v8l-7 4z"/><path fill="#1c1c28" d="M18 27l6-3 5 4q-4 5-10 3z"/></svg></div>
  <div class="app run"><svg width="34" height="34" viewBox="0 0 34 34"><use href="#chrome" width="30" height="30"/><circle cx="22" cy="22.500" r="9.800" fill="#080808"/><path fill="none" stroke="#cfc9c0" stroke-width="1.300" d="M18 18.500l1.500 4 2.500 3.500 2.500-3.500 1.500-4M20 27h4M20 22l1.500 1M24 22l-1.500 1"/></svg></div>
  <svg width="33" height="30" viewBox="0 0 33 30"><defs><linearGradient id="su" x2="0" y2="1"><stop stop-color="#f9b233"/><stop offset="1" stop-color="#ec6d10"/></linearGradient></defs><circle cx="15.500" cy="15.500" r="13" fill="url(#su)"/><circle cx="26.500" cy="4" r="4" fill="#c4281c"/><path fill="#b9d2f5" d="M3 12q-4-1-3-4.500T5 5q2-5 7-3 3 1 3 4 3 1 2.500 3.500T14 12zM16 29q-3-1-2.500-4t4-3q2-5 7-3.500 3 1 3 4 3.500.5 3 3.500T27 29z"/></svg>
  <span class="w1">75°F</span><span class="w2t">Partly sunny</span>
  <svg class="wt" width="16" height="9" viewBox="0 0 16 9"><path d="M.5 8.500L8 1l7.500 7.500"/></svg>
  <svg width="21" height="13" viewBox="0 0 21 13"><path fill="#b8bdc4" d="M5 5q2-5 7-4.500 4 .5 5 5l-7 2z"/><path fill="#fff" d="M4 13q-4-.5-4-4t5-4q3 0 5 2 3-3 6.500-.5 4.500.5 4.500 3.500t-4 3z"/></svg>
  <svg width="21" height="21" viewBox="0 0 21 21"><path fill="#fff" d="M0 3q6 0 9.500-3 3 3 9.500 3v7q-1 6-9.500 9Q1 16 0 10z"/><path d="M9.500 0v19M0 9.500h19" stroke="#14202d" stroke-width="1.500"/><circle cx="14.500" cy="14.500" r="5.500" fill="#17954c"/><path d="M12 14.500l2 2 3.500-4" fill="none" stroke="#fff" stroke-width="1.400"/></svg>
  <svg width="15" height="20"><rect width="15" height="20" rx="7" fill="#0a84ff"/><path d="M4 6.500l7 7-3.500 3v-13l3.500 3-7 7" fill="none" stroke="#fff" stroke-width="1.200"/></svg>
  <svg width="19" height="12"><path d="M.6.6h16.500v10.500H.6zM18 4v4" fill="none" stroke="#fff" stroke-width="1.300"/><path fill="#fff" d="M2.500 2.500h10v7h-10z"/></svg>
  <svg width="16" height="16" viewBox="0 0 16 16"><g fill="none" stroke="#fff" stroke-width="1.200"><path d="M1 15Q2 2 15 1" opacity=".7"/><path d="M5 15q1-9 10-10M9 15q.500-5 6-6"/></g><path fill="#fff" d="M12 12h3v3h-3z"/></svg>
  <svg width="21" height="16" viewBox="0 0 21 16"><g fill="none" stroke="#fff" stroke-width="1.200"><path d="M.6 5.500h3l4-4v13l-4-4h-3zM10.500 5q2 3 0 6M13.500 3q3.500 5 0 10"/><path d="M16.500 1q5 7 0 14" opacity=".5"/></g></svg>
  <span class="eng">ENG</span>
  <span class="clock">7:48 PM<br>5/4/2023</span>
  <svg width="31" height="32" viewBox="0 0 31 32"><path fill="#fff" d="M0 1h20v17H6l-4 4v-4H0z"/><path d="M4 6h12M4 10h12M4 14h12" stroke="#1c2b40" stroke-width="1.400"/><circle cx="20.500" cy="20.500" r="9.800" fill="#30363d" stroke="#7a7f86"/><text x="20.500" y="26" text-anchor="middle" fill="#fff" font-size="14" font-weight="600" font-family="Open Sans">4</text></svg>
  <i class="peek"></i>
</div>
</body>
</html>
```
FILE: styles.css
```css
* { box-sizing: border-box; }
body {
  margin: 0;
  width: 1920px;
  height: 1080px;
  overflow: hidden;
  background: #fafbfe;
  color: #282c33;
  font-family: Inter, "Liberation Sans", sans-serif;
  font-size: 18px;
  white-space: nowrap;
}
svg { display: block; flex: none; }
.defs { position: absolute; }
.ic { fill: none; stroke: #282c33; stroke-width: 1.4; stroke-linejoin: round; overflow: visible; }
.ic.w2 { stroke-width: 1.9; }
.ic.dim { stroke: #a3a7ad; }
.car { fill: #282c33; }

/* browser tab strip */
.tabstrip {
  height: 43px;
  background: #000;
  display: grid;
  grid-template-columns: 57px 58px 57px 187px 35px 15px 20px 230px 34px 15px 20px 230px 34px 312px 20px 231px 35px 14px 193px 55px 30px;
  padding-left: 21px;
  align-items: center;
  color: #fff;
}
.tabstrip > svg { margin-top: -5px; }
.tabstrip > svg.low { margin-top: -1px; }
.wt { fill: none; stroke: #fff; stroke-width: 1.2; }
.wb { fill: none; stroke: #f2f2f2; stroke-width: 2; }
.sep { width: 1px; height: 25px; background: #4b4b4b; margin-left: 1px; }
.tt { font: 14.4px "Open Sans", "Noto Sans", sans-serif; color: #fff; margin-top: -3px; }
.t-b { font-size: 14.2px; }
.t-c { font-size: 14.1px; }
.t-e { justify-self: end; margin-right: 11px; font-size: 14px; }
.fade { -webkit-mask-image: linear-gradient(90deg, #000 88%, transparent 96%); mask-image: linear-gradient(90deg, #000 88%, transparent 96%); }
.tab-on {
  position: relative;
  width: 300px;
  height: 43px;
  background: #353535;
  border-radius: 8px 8px 0 0;
  display: grid;
  grid-template-columns: 21px 230px 20px;
  padding-left: 14px;
  align-items: center;
}
.tab-on::before, .tab-on::after {
  content: "";
  position: absolute;
  bottom: 0;
  width: 9px;
  height: 9px;
}
.tab-on::before { left: -9px; background: radial-gradient(circle at 0 0, transparent 9px, #353535 9.5px); }
.tab-on::after { right: -9px; background: radial-gradient(circle at 100% 0, transparent 9px, #353535 9.5px); }
.tab-on svg { margin-top: -1px; }

/* navigation bar */
.navbar {
  height: 46px;
  background: #353535;
  border-bottom: 1px solid #666;
  display: grid;
  grid-template-columns: 29px 44px 37px 1668px 41px 40px 20px;
  padding: 0 0 2px 25px;
  align-items: center;
}
.omnibox {
  width: 1650px;
  height: 35px;
  border-radius: 18px;
  background: #202124;
  display: grid;
  grid-template-columns: 39px 42px 433px 1094px 12px;
  align-items: center;
  padding-left: 14px;
}
.url { font: 16.84px/24px "Open Sans", "Noto Sans", sans-serif; color: #9aa0a6; }
.url b { font-weight: 400; color: #fff; }
.g1, .g2, .gd { fill: none; stroke: #c9cbce; stroke-width: 1.4; }
.g2 { stroke-width: 1.9; }
.gd { stroke: #85888b; stroke-width: 2; }

/* application header */
.apphead {
  position: relative;
  height: 81px;
  border-bottom: 1px solid #dfe3e8;
  display: flex;
  padding-left: 23px;
}
.logo { margin-top: 27px; }
.headmain { padding-left: 23px; padding-top: 10px; width: 1459px; }
.titlerow { display: grid; grid-template-columns: 22px 43px 34px 30px 52px 12px; height: 30px; align-items: center; }
.doc { font-size: 23px; font-weight: 700; }
.dot { width: 10px; height: 10px; border-radius: 50%; background: #0d7bc0; }
.dot.blue { background: #1071e5; }
.menurow { display: grid; grid-template-columns: 49px 52px 73px 61px 67px 87px 69px 46px 33px 60px 32px 80px; height: 30px; align-items: center; }
.headright { display: grid; grid-template-columns: 48px 52px 46px 194px 40px; align-items: center; padding-bottom: 0; margin-left: 24px; height: 80px; }
.sharebtn { width: 174px; height: 40px; border-radius: 5px; background: #3d40c2; color: #fff; display: grid; grid-template-columns: 36px 73px 41px; padding-left: 24px; align-items: center; }
.sharebtn b { font-size: 18px; font-weight: 700; }
.link { width: 41px; height: 40px; background: #fff; border: 1px solid #3d40c2; border-radius: 0 5px 5px 0; display: grid; place-items: center; }
.rs { width: 40px; height: 40px; border-radius: 50%; background: #f0625a; color: #fff; font-weight: 700; font-size: 17.5px; display: grid; place-items: center; }
.banner {
  position: absolute;
  left: 775px;
  top: 0;
  width: 370px;
  height: 45px;
  border-radius: 0 0 5px 5px;
  background: #fa6b14;
  box-shadow: 0 2px 4px rgba(0, 0, 0, .5);
  color: #fff;
  font-size: 17.55px;
  display: grid;
  grid-template-columns: 304px 12px;
  align-items: center;
  padding-left: 31px;
}
.banner svg { stroke: #fff; stroke-width: 1.4; }
.banner u { text-underline-offset: 2px; font-weight: 500; letter-spacing: -.07px; }
.menurow u { text-underline-offset: 3px; text-decoration-thickness: 1px; }

/* formatting toolbar */
.toolbar {
  height: 51px;
  border-bottom: 1px solid #dfe3e8;
  display: grid;
  grid-template-columns: 43px 34px 14px 35px 6px 175px 193px 117px 43px 42px 38px 44px 42px 34px 13px 41px 45px 44px 41px 39px 34px 29px 173px 35px 192px 35px 16px 43px 42px 188px 30px;
  padding-left: 14px;
  align-items: center;
}
.toolbar > .ic { margin-left: -1px; }
.vd { width: 1px; height: 50px; background: #dfe3e8; }
.vd.two { width: 2px; }
.drop { margin-top: 12px; align-self: start; }
.al { stroke: #555a62; }
.fmt { font-weight: 700; font-size: 21px; }
.sel { height: 30px; border: 1px solid #9ea5b1; border-radius: 4px; background: #fff; display: grid; align-items: center; }
.s-body { width: 170px; grid-template-columns: 137px 12px; padding-left: 10px; }
.s-font { width: 188px; grid-template-columns: 156px 12px; padding-left: 10px; }
.lib { font: 17.8px "Liberation Sans", sans-serif; color: #444a53; }
.s-size { width: 100px; grid-template-columns: 25px 49px 24px; text-align: center; }
.s-size span { border: solid #9ea5b1; border-width: 0 1px; height: 28px; line-height: 27px; letter-spacing: -.9px; }
.s-size b { font-weight: 600; }
.s-line { width: 160px; grid-template-columns: 46px 37px 46px 8px; padding-left: 13px; background: linear-gradient(#9ea5b1, #9ea5b1) 74px 0 / 1px 30px no-repeat #fff; }
.s-line .px { padding-left: 1px; }
.s-end { width: 180px; grid-template-columns: 58px 36px 54px 12px; padding-left: 10px; background: linear-gradient(#9ea5b1, #9ea5b1) 88px 0 / 1px 30px no-repeat #fff; }
.badge { width: 20px; height: 20px; border-radius: 50%; background: #cfe4ff; color: #1071e5; font: 600 14px/20px Inter, sans-serif; text-align: center; }

/* workspace */
.work { display: grid; grid-template-columns: 51px 269px 1600px; height: 770px; }
.rail { border-right: 1px solid #dfe3e8; display: flex; flex-direction: column; align-items: center; padding-top: 5px; }
.railon { width: 40px; height: 40px; border-radius: 4px; background: #cfe4ff; display: grid; place-items: center; margin-bottom: 13px; }
.rail > svg + svg { margin-top: 20px; margin-left: 1px; }
.panel { border-right: 1px solid #dfe3e8; display: flex; flex-direction: column; }
.phead { height: 50px; border-bottom: 1px solid #dfe3e8; display: grid; grid-template-columns: 165px 35px 27px; padding-left: 20px; align-items: center; }
.phead b { font-size: 22.8px; font-weight: 700; letter-spacing: -.1px; padding-top: 1px; }
.plist { position: relative; height: 524px; overflow: hidden; border-bottom: 1px solid #dfe3e8; }
.plist section { border-bottom: 1px solid #dfe3e8; padding-left: 21px; }
.sec1 { height: 199px; }
.sec2 { height: 167px; }
.sec3 { height: 200px; }
h3 { margin: 0; height: 66px; display: grid; grid-template-columns: 20px 187px 12px; align-items: center; font-weight: 350; font-size: 17.5px; padding-left: 2px; color: #3b414c; }
h3 svg { fill: #6f7681; margin-top: -2px; }
h3 .cl { stroke: #282c33; stroke-width: 1.4; margin-top: 0; }
.shapes { margin-left: 0; margin-top: 8px; }
.sec2 .shapes { margin-left: -1px; margin-top: 2px; }
.sec3 .shapes { margin-left: -1px; margin-top: 5px; }
.sec1 a { display: block; margin: 8px 0 0 34px; line-height: 24px; color: #1071e5; font-weight: 350; font-size: 17.9px; }
.sb { position: absolute; left: 258px; top: 3px; width: 7px; height: 233px; border-radius: 4px; background: #c8ccd6; }
.promo { position: relative; height: 141px; background: #fff; border-bottom: 1px solid #dfe3e8; text-align: center; font-weight: 600; font-size: 17.6px; }
.promo p { margin: 0; padding-top: 20px; line-height: 25px; }
.browse { width: 210px; height: 40px; margin: 10px 0 0 29px; border-radius: 4px; background: #3d40c2; color: #fff; line-height: 40px; font-size: 17.2px; }
.deco { position: absolute; left: 0; top: 0; }
.import { height: 55px; display: grid; grid-template-columns: 37px 120px; padding-left: 61px; align-items: center; font-size: 20.4px; }
.canvas { position: relative; overflow: hidden; background: #f0f2f4; height: 769px; }
.page {
  position: absolute;
  left: 68px;
  top: 79px;
  width: 1540px;
  height: 700px;
  box-shadow: 0 0 5px 1px rgba(0, 0, 0, .22);
  background:
    linear-gradient(90deg, #dedede 2px, transparent 2px 94px, #dedede 94px 95px, transparent 95px 188px, #dedede 188px 189px, transparent 189px 282px, #dedede 282px 283px, transparent 283px) -2px -2px / 375px 375px,
    linear-gradient(#dedede 2px, transparent 2px 94px, #dedede 94px 95px, transparent 95px 188px, #dedede 188px 189px, transparent 189px 282px, #dedede 282px 283px, transparent 283px) -2px -2px / 375px 375px,
    linear-gradient(90deg, #efefef 2px, transparent 2px 19px, #efefef 19px 20px, transparent 20px 38px, #efefef 38px 39px, transparent 39px 57px, #efefef 57px 58px, transparent 58px) -2px -2px / 75px 75px,
    linear-gradient(#efefef 2px, transparent 2px 19px, #efefef 19px 20px, transparent 20px 38px, #efefef 38px 39px, transparent 39px 57px, #efefef 57px 58px, transparent 58px) -2px -2px / 75px 75px,
    #fff;
}
.flow { position: absolute; left: 0; top: 0; }
.ed { fill: none; stroke: #3b414c; stroke-width: 1.1; }
.ed.gr { stroke: #008a0e; stroke-width: 2; }
.ed.rd { stroke: #e81313; stroke-width: 2; }
.ah { fill: #3b414c; }
.nd { stroke: #3b414c; stroke-width: 1; }
.bl { fill: #6db1ff; }
.lbl { font: 20.6px "Liberation Sans", sans-serif; fill: #3b414c; }
.yn { font-size: 16px; font-weight: 700; fill: #333; }
.q { font: 17.3px Roboto, sans-serif; fill: #4a4d52; }

/* page / zoom bar */
.status {
  height: 39px;
  border-top: 1px solid #dfe3e8;
  display: grid;
  grid-template-columns: 46px 44px 122px 1134px 14px 32px 146px 30px 25px 14px 36px 10px 32px 16px 50px 68px 33px 14px 30px;
  padding-left: 16px;
  align-items: center;
}
.status .ic { margin-left: -1px; margin-top: 2px; }
.status .badge { margin-top: 1px; }
.status .vd { height: 38px; }
.ptab { width: 105px; height: 35px; align-self: start; background: #6f7681; color: #fff; border-radius: 0 0 4px 4px; display: grid; grid-template-columns: 76px 10px; align-items: center; padding-left: 10px; letter-spacing: -.2px; }
.so, .zm { font-weight: 350; padding-top: 1px; }
.zm { font-size: 17.5px; }

/* windows taskbar */
.taskbar {
  height: 50px;
  background: linear-gradient(90deg, #223840, #213640 50%, #1c2b40 85%, #1a2745);
  display: grid;
  grid-template-columns: 40px 380px 59px 62px 62px 47px 67px 573px 40px 44px 128px 27px 31px 32px 29px 32px 27px 33px 43px 93px 45px 2px;
  padding-left: 20px;
  align-items: center;
  color: #fff;
  font: 16.5px "Open Sans", "Noto Sans", sans-serif;
}
.search { width: 360px; height: 50px; background: #f2f2f2; border: 1px solid #bbb; display: grid; grid-template-columns: 34px 200px; padding-left: 14px; align-items: center; color: #333; }
.search span, .w1, .w2t { margin-top: -1px; }
.search span { font-size: 16.7px; }
.app { height: 50px; }
.act { width: 61px; background: #4f616a; border-bottom: 3px solid #76b9ed; padding: 10px 0 0 15px; }
.run { width: 51px; border-bottom: 3px solid #76b9ed; padding: 10px 0 0 10px; }
.eng { font-size: 14.2px; }
.clock { font-size: 14.4px; line-height: 23px; width: 62px; text-align: center; }
.peek { width: 1px; height: 50px; background: #5b6674; }
```
